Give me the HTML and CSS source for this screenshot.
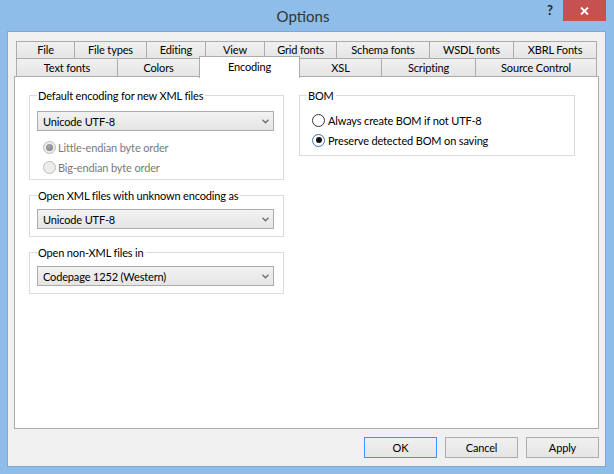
FILE: index.html
```html
<!DOCTYPE html>
<html lang="en">
<head>
    <meta charset="UTF-8">
    <title>Options</title>
    <link rel="stylesheet" href="styles.css">
</head>
<body>
    <div class="window">
        <div class="titlebar">
            <div></div>
            <div class="title">Options</div>
            <div class="controls">
                <span class="help">?</span>
                <span class="close">
                    <svg width="9" height="8" viewBox="0 0 9 8"><path d="M1 0.5 L8 7.5 M8 0.5 L1 7.5" stroke="#fff" stroke-width="1.8" fill="none"/></svg>
                </span>
            </div>
        </div>

        <div class="client">
            <div class="tabs">
                <div class="tab-row row-back">
                    <div class="tab" style="width:59px">File</div>
                    <div class="tab" style="width:73px">File types</div>
                    <div class="tab" style="width:60px">Editing</div>
                    <div class="tab" style="width:60px">View</div>
                    <div class="tab" style="width:73px">Grid fonts</div>
                    <div class="tab" style="width:94px">Schema fonts</div>
                    <div class="tab" style="width:85px">WSDL fonts</div>
                    <div class="tab" style="width:84px">XBRL Fonts</div>
                </div>
                <div class="tab-row row-front">
                    <div class="tab" style="width:102px">Text fonts</div>
                    <div class="tab" style="width:83px">Colors</div>
                    <div class="tab selected" style="width:101px">Encoding</div>
                    <div class="tab" style="width:83px">XSL</div>
                    <div class="tab" style="width:95px">Scripting</div>
                    <div class="tab" style="width:122px">Source Control</div>
                </div>
            </div>

            <div class="panel">
                <div class="column">
                    <fieldset class="group group-first">
                        <legend>Default encoding for new XML files</legend>
                        <div class="combo">
                            <span>Unicode UTF-8</span>
                            <svg width="7" height="5" viewBox="0 0 7 5"><path d="M0.5 0.8 L3.5 3.8 L6.5 0.8" fill="none" stroke="#707070" stroke-width="1.4"/></svg>
                        </div>
                        <div class="radios radios-indent">
                            <div class="radio-row disabled"><span class="radio checked"></span>Little-endian byte order</div>
                            <div class="radio-row disabled"><span class="radio"></span>Big-endian byte order</div>
                        </div>
                    </fieldset>

                    <fieldset class="group">
                        <legend>Open XML files with unknown encoding as</legend>
                        <div class="combo">
                            <span>Unicode UTF-8</span>
                            <svg width="7" height="5" viewBox="0 0 7 5"><path d="M0.5 0.8 L3.5 3.8 L6.5 0.8" fill="none" stroke="#707070" stroke-width="1.4"/></svg>
                        </div>
                    </fieldset>

                    <fieldset class="group">
                        <legend>Open non-XML files in</legend>
                        <div class="combo">
                            <span>Codepage 1252 (Western)</span>
                            <svg width="7" height="5" viewBox="0 0 7 5"><path d="M0.5 0.8 L3.5 3.8 L6.5 0.8" fill="none" stroke="#707070" stroke-width="1.4"/></svg>
                        </div>
                    </fieldset>
                </div>

                <div class="column">
                    <fieldset class="group group-bom">
                        <legend>BOM</legend>
                        <div class="radios">
                            <div class="radio-row"><span class="radio"></span>Always create BOM if not UTF-8</div>
                            <div class="radio-row"><span class="radio checked"></span>Preserve detected BOM on saving</div>
                        </div>
                    </fieldset>
                </div>
            </div>

            <div class="buttons">
                <button class="btn default">OK</button>
                <button class="btn">Cancel</button>
                <button class="btn">Apply</button>
            </div>
        </div>
    </div>
</body>
</html>
```

FILE: styles.css
```css
/* Options dialog, Windows 8 look */
body {
    margin: 0;
    padding: 0;
    font-family: Lato, "Liberation Sans", sans-serif;
    font-size: 11px;
    letter-spacing: -0.15px;
    color: #000;
}

.window {
    width: 614px;
    height: 474px;
    background-color: #8ebde9;
    display: flex;
    flex-direction: column;
}

.titlebar {
    height: 31px;
    display: grid;
    grid-template-columns: 1fr auto 1fr;
    padding-right: 8px;
}

.title {
    font-size: 15px;
    letter-spacing: 0;
    color: #333;
    line-height: 33px;
}

.controls {
    justify-self: end;
    display: flex;
    align-items: flex-start;
}

.help {
    width: 26px;
    height: 21px;
    line-height: 20px;
    text-align: center;
    font-weight: bold;
    font-size: 13px;
    color: #222;
}

.close {
    width: 43px;
    height: 21px;
    background-color: #c75050;
    display: flex;
    align-items: center;
    justify-content: center;
}

.client {
    flex: 1;
    margin: 0 8px 7px 7px;
    border: 1px solid #7ea9d6;
    background-color: #f0f0f0;
    padding: 9px 6px 8px 6px;
    display: flex;
    flex-direction: column;
}

/* tabs */
.tabs {
    margin: 0 2px;
}

.tab-row {
    display: flex;
    align-items: flex-start;
}

.row-back {
    height: 17px;
}

.row-front {
    height: 18px;
}

.tab {
    box-sizing: border-box;
    height: 100%;
    margin-right: -1px;
    border: 1px solid #acacac;
    border-bottom: none;
    background: linear-gradient(#f0f0f0, #e5e5e5);
    text-align: center;
    white-space: nowrap;
}

.row-back .tab {
    line-height: 16px;
}

.row-front .tab {
    line-height: 17px;
}

.tab.selected {
    position: relative;
    z-index: 1;
    height: 22px;
    margin-top: -2px;
    background: #fff;
    line-height: 19px;
}

/* page */
.panel {
    flex: 1;
    border: 1px solid #acacac;
    background-color: #fff;
    display: grid;
    grid-template-columns: 255px 276px;
    column-gap: 15px;
    align-items: start;
    align-content: start;
    padding: 11px 0 0 14px;
}

.column {
    display: flex;
    flex-direction: column;
    gap: 8px;
}

.group {
    margin: 0;
    min-width: 0;
    border: 1px solid #dcdcdc;
    padding: 6px 9px 7px 7px;
}

.group legend {
    padding: 0 2px 0 1px;
    line-height: 15px;
}

.group-first {
    padding-top: 8px;
    padding-bottom: 2px;
}

.group-bom {
    padding-top: 7px;
    padding-bottom: 5px;
}

.combo {
    box-sizing: border-box;
    height: 20px;
    border: 1px solid #acacac;
    background: linear-gradient(#f2f2f2, #e5e5e5);
    display: flex;
    align-items: center;
    justify-content: space-between;
    padding: 0 4px 0 5px;
}

.radios {
    margin-top: 6px;
}

.group-bom .radios {
    margin-top: 0;
    margin-left: 5px;
}

.radios-indent {
    margin-left: 6px;
}

.radio-row {
    height: 20px;
    display: flex;
    align-items: center;
    gap: 3px;
}

.radio-row.disabled {
    color: #7a7a7a;
    gap: 2px;
}

.radio {
    box-sizing: border-box;
    width: 13px;
    height: 13px;
    border: 1px solid #333;
    border-radius: 50%;
    background-color: #fff;
    display: flex;
    align-items: center;
    justify-content: center;
}

.radio.checked {
    border-color: #3f73ad;
}

.radio.checked::after {
    content: "";
    width: 6px;
    height: 6px;
    border-radius: 50%;
    background-color: #111;
}

.disabled .radio {
    border-color: #bcbcbc;
    background-color: #ececec;
}

.disabled .radio.checked::after {
    width: 7px;
    height: 7px;
    background: radial-gradient(circle at 40% 35%, #a8a8a8, #7c7c7c);
}

/* bottom buttons */
.buttons {
    margin-top: 8px;
    display: flex;
    justify-content: flex-end;
    gap: 8px;
}

.btn {
    box-sizing: border-box;
    width: 73px;
    height: 21px;
    margin: 0;
    padding: 0;
    border: 1px solid #acacac;
    background: linear-gradient(#f0f0f0, #e5e5e5);
    font-family: Lato, "Liberation Sans", sans-serif;
    font-size: 11px;
    letter-spacing: -0.15px;
    color: #000;
}

.btn.default {
    border-color: #3399ff;
}
```
